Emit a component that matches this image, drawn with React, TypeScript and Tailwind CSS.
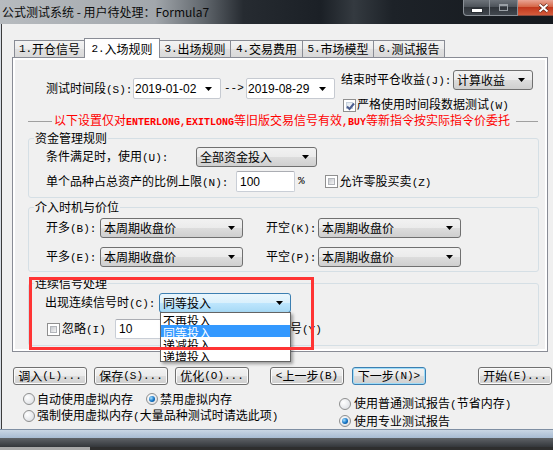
import React from 'react';

const MONO = "font-['Liberation_Mono',monospace]";
const BTN_BG = 'bg-[linear-gradient(#f2f2f2,#ebebeb_50%,#dddddd_50%,#cfcfcf)]';

// SimSun-like: CJK at 12px, half-width Latin in a mono face
function T({ s, mono = 'text-[11px]' }: { s: string; mono?: string }) {
  const parts = s.split(/([\x20-\x7e]+)/);
  return (
    <>
      {parts.map((p, i) =>
        i % 2 === 1 ? (
          <span key={i} className={`${MONO} ${mono}`}>{p}</span>
        ) : (
          <React.Fragment key={i}>{p}</React.Fragment>
        )
      )}
    </>
  );
}

function Arrow() {
  return (
    <svg width="7" height="4" viewBox="0 0 7 4" className="shrink-0">
      <path d="M0 0H7L3.5 4Z" fill="#000" />
    </svg>
  );
}

function Combo({ text, w, focus = false }: { text: string; w: string; focus?: boolean }) {
  return (
    <div
      className={`${w} h-[20px] shrink-0 rounded-[3px] border flex items-center pl-[3px] pr-[7px] ${
        focus
          ? 'border-[#3c7fb1] bg-[linear-gradient(#eaf6fd,#d9f0fc_50%,#bee6fd_50%,#a7d9f5)]'
          : `border-[#707070] ${BTN_BG}`
      }`}
    >
      <span className="flex-1 leading-[14px] whitespace-nowrap">{text}</span>
      <Arrow />
    </div>
  );
}

function DateBox({ v, w }: { v: string; w: string }) {
  return (
    <div className={`${w} h-[21px] shrink-0 bg-white border border-[#c6cad1] rounded-[2px] flex items-center pl-[1px] pr-[8px]`}>
      <span className="flex-1 font-['Liberation_Sans',sans-serif] text-[12px] leading-[14px]">{v}</span>
      <Arrow />
    </div>
  );
}

function Input({ v, w, h = 'h-[21px]' }: { v: string; w: string; h?: string }) {
  return (
    <div className={`${w} ${h} shrink-0 bg-white border border-[#c9ced6] border-t-[#abadb3] rounded-[2px] flex items-center pl-[3px] font-['Liberation_Sans',sans-serif] text-[12px] leading-[14px]`}>
      {v}
    </div>
  );
}

function Check({ on = false }: { on?: boolean }) {
  return (
    <span className="relative block shrink-0 w-[13px] h-[13px] border border-[#8f8f8f] bg-white p-[2px]">
      <span
        className={`block w-full h-full border ${
          on
            ? 'border-[#c5d0dc] bg-[linear-gradient(135deg,#dfe6ee,#fbfcfd)]'
            : 'border-[#b2b5ba] bg-[linear-gradient(135deg,#c6c9ce,#f4f4f4)]'
        }`}
      />
      {on && (
        <svg className="absolute left-[1px] top-[1px]" width="11" height="11" viewBox="0 0 11 11">
          <path d="M2 5.5L4.5 8L9 2.5" fill="none" stroke="#4b5d8f" strokeWidth="2" />
        </svg>
      )}
    </span>
  );
}

function Radio({ on = false }: { on?: boolean }) {
  return (
    <span className="shrink-0 w-[12px] h-[12px] rounded-full border border-[#8e8f8f] bg-[radial-gradient(circle_at_35%_35%,#ffffff,#d6d9de)] flex items-center justify-center">
      {on && (
        <span className="w-[6px] h-[6px] rounded-full bg-[radial-gradient(circle_at_35%_35%,#a6e0ff,#1172c4_55%,#053f78)]" />
      )}
    </span>
  );
}

function Btn({ label, cls = '', focus = false }: { label: string; cls?: string; focus?: boolean }) {
  return (
    <div
      className={`w-[74px] h-[18px] shrink-0 rounded-[3px] border flex items-center justify-center leading-[14px] whitespace-nowrap ${BTN_BG} ${
        focus ? 'border-[#3c7fb1] shadow-[inset_0_0_0_1px_#9fdcf8]' : 'border-[#707070] shadow-[inset_0_0_0_1px_#fbfbfb]'
      } ${cls}`}
    >
      <T s={label} />
    </div>
  );
}

function Group({ title, h, cls, children }: { title: string; h: string; cls: string; children: React.ReactNode }) {
  return (
    <fieldset className={`ml-[13px] w-[511px] ${h} ${cls} border border-[#d5dfe5] rounded-[3px]`}>
      <legend className="ml-[5px] px-[1px] leading-[14px]">{title}</legend>
      {children}
    </fieldset>
  );
}

const tabs = ['1.开仓信号', '2.入场规则', '3.出场规则', '4.交易费用', '5.市场模型', '6.测试报告'];
const tabW = ['w-[71px]', 'w-[76px]', 'w-[72px]', 'w-[73px]', 'w-[72px]', 'w-[72px]'];
const listItems = ['不再投入', '同等投入', '递减投入', '递增投入'];

export default function App() {
  return (
    <div className="relative w-[553px] h-[450px] overflow-hidden bg-[#d7dde5] font-['Noto_Sans_CJK_SC',sans-serif] text-[12px] text-black">
      {/* title bar */}
      <div className="h-[24px] flex justify-between bg-[linear-gradient(90deg,#b7bbbf_0%,#a2a7ac_28%,#60666c_37%,#262b31_44%,#1b2026_58%,#343a40_64%,#1d2228_71%,#15191e_100%)]">
        <div className="pl-[2px] pt-[4px] leading-[16px] text-[#0b0b0b] whitespace-nowrap">公式测试系统 - 用户待处理：Formula7</div>
        <div className="flex items-start">
          <div className="w-[27px] h-[16px] rounded-bl-[4px] border border-t-0 border-[#8a9097] bg-[linear-gradient(#6d737a,#4a5057_50%,#30353b_50%,#42484f)] flex items-center justify-center">
            <span className="w-[10px] h-[3px] mt-[5px] bg-white border border-[#2a2f35] box-content" />
          </div>
          <div className="w-[28px] h-[16px] border border-t-0 border-l-0 border-[#8a9097] bg-[linear-gradient(#6d737a,#4a5057_50%,#30353b_50%,#42484f)] flex items-center justify-center">
            <span className="w-[9px] h-[7px] border border-[#9aa0a6] border-t-2 bg-transparent" />
          </div>
          <div className="w-[35px] h-[16px] border-b border-[#8a4a3e] bg-[linear-gradient(#e9a494,#d3603f_50%,#c2381d_50%,#d45b3c)] flex items-center pl-[20px]">
            <svg width="11" height="10" viewBox="0 0 11 10">
              <path d="M1.5 1.5L9.5 8.5M9.5 1.5L1.5 8.5" stroke="#5a2418" strokeWidth="3.4" />
              <path d="M1.5 1.5L9.5 8.5M9.5 1.5L1.5 8.5" stroke="#ffffff" strokeWidth="2" />
            </svg>
          </div>
        </div>
      </div>

      {/* client area */}
      <div className="ml-px h-[405px] border-l border-[#3c3c3c] bg-[#f0f0f0] overflow-hidden flex flex-col">
        <div className="h-[33px] pt-[14px] pl-[12px] flex items-end">
          {tabs.map((t, i) => (
            <div
              key={t}
              className={`${tabW[i]} ${i ? '-ml-px' : ''} ${
                i === 1
                  ? 'h-[20px] -mb-px relative z-10 bg-white'
                  : 'h-[17px] bg-[linear-gradient(#f3f3f3,#ebebeb_50%,#e1e1e1_50%,#d9d9d9)]'
              } border border-b-0 border-[#898c95] flex items-center justify-center whitespace-nowrap leading-[14px]`}
            >
              <T s={t} />
            </div>
          ))}
        </div>

        <div className="ml-[10px] w-[536px] h-[295px] shrink-0 border border-[#898c95] bg-white p-[2px]">
          <div className="h-full bg-[#f0f0f0]">
            {/* period row */}
            <div className="flex items-start">
              <div className="ml-[31px] mt-[18px] h-[21px] flex items-center">
                <span className="w-[87px] whitespace-nowrap"><T s="测试时间段(S):" /></span>
                <DateBox v="2019-01-02" w="w-[88px]" />
                <span className={`ml-[3px] w-[22px] ${MONO} text-[11px]`}>--&gt;</span>
                <DateBox v="2019-08-29" w="w-[89px]" />
              </div>
              <div className="ml-[6px] mt-[10px] flex flex-col">
                <div className="h-[20px] flex items-center">
                  <span className="w-[112px] whitespace-nowrap"><T s="结束时平仓收益(J):" /></span>
                  <Combo text="计算收益" w="w-[80px]" />
                </div>
                <div className="mt-[8px] h-[14px] flex items-center">
                  <span className="ml-[2px]"><Check on /></span>
                  <span className="ml-[1px] whitespace-nowrap"><T s="严格使用时间段数据测试(W)" /></span>
                </div>
              </div>
            </div>

            {/* red note */}
            <div className="mt-[2px] ml-[13px] h-[14px] flex items-center">
              <span className="shrink-0 w-[24px] h-px bg-[#a0a0a0]" />
              <span className="ml-[2px] shrink-0 text-[#ff0000] whitespace-nowrap leading-[14px]">
                <T s="以下设置仅对ENTERLONG,EXITLONG等旧版交易信号有效,BUY等新指令按实际指令价委托" mono="text-[10px] font-bold" />
              </span>
              <span className="ml-[6px] shrink-0 w-[22px] h-px bg-[#a0a0a0]" />
            </div>

            <Group title="资金管理规则" h="h-[67px]" cls="mt-[3px]">
              <div className="mt-[2px] ml-[17px] h-[20px] flex items-center">
                <span className="w-[150px] whitespace-nowrap"><T s="条件满足时，使用(U):" /></span>
                <Combo text="全部资金投入" w="w-[121px]" />
              </div>
              <div className="mt-[4px] ml-[17px] h-[21px] flex items-center">
                <span className="w-[190px] whitespace-nowrap"><T s="单个品种占总资产的比例上限(N):" /></span>
                <Input v="100" w="w-[59px]" />
                <span className={`ml-[3px] ${MONO} text-[11px]`}>%</span>
                <span className="ml-[20px]"><Check /></span>
                <span className="ml-[2px] whitespace-nowrap"><T s="允许零股买卖(Z)" /></span>
              </div>
            </Group>

            <Group title="介入时机与价位" h="h-[72px]" cls="mt-[2px]">
              <div className="mt-[4px] ml-[17px] h-[20px] flex items-center">
                <span className="w-[54px] whitespace-nowrap"><T s="开多(B):" /></span>
                <Combo text="本周期收盘价" w="w-[143px]" />
                <span className="ml-[23px] w-[52px] whitespace-nowrap"><T s="开空(K):" /></span>
                <Combo text="本周期收盘价" w="w-[143px]" />
              </div>
              <div className="mt-[9px] ml-[17px] h-[20px] flex items-center">
                <span className="w-[54px] whitespace-nowrap"><T s="平多(E):" /></span>
                <Combo text="本周期收盘价" w="w-[143px]" />
                <span className="ml-[23px] w-[52px] whitespace-nowrap"><T s="平空(P):" /></span>
                <Combo text="本周期收盘价" w="w-[143px]" />
              </div>
            </Group>

            <Group title="连续信号处理" h="h-[70px]" cls="mt-[4px]">
              <div className="mt-[3px] ml-[16px] h-[20px] flex items-center">
                <span className="w-[114px] whitespace-nowrap"><T s="出现连续信号时(C):" /></span>
                <Combo text="同等投入" w="w-[132px]" focus />
              </div>
              <div className="mt-[6px] ml-[18px] h-[20px] flex items-center">
                <Check />
                <span className="ml-[2px] w-[53px] whitespace-nowrap"><T s="忽略(I)" /></span>
                <Input v="10" w="w-[110px]" h="h-[20px]" />
                <span className="ml-[5px] whitespace-nowrap"><T s="周期内的信号(Y)" /></span>
              </div>
            </Group>
          </div>
        </div>

        {/* buttons */}
        <div className="mt-[15px] ml-[11px] h-[18px] flex">
          <Btn label="调入(L)..." />
          <Btn label="保存(S)..." cls="ml-[7px]" />
          <Btn label="优化(O)..." cls="ml-[7px]" />
          <Btn label="<上一步(B)" cls="ml-[21px]" />
          <Btn label="下一步(N)>" cls="ml-[8px]" focus />
          <Btn label="开始(E)..." cls="ml-[52px]" />
        </div>

        {/* memory / report options */}
        <div className="mt-[6px] flex items-start">
          <div className="ml-[21px] w-[300px] flex flex-col gap-[1px]">
            <div className="h-[16px] flex items-center whitespace-nowrap">
              <Radio />
              <span className="ml-[2px] w-[96px]">自动使用虚拟内存</span>
              <span className="ml-[13px]"><Radio on /></span>
              <span className="ml-[2px]">禁用虚拟内存</span>
            </div>
            <div className="h-[16px] flex items-center whitespace-nowrap">
              <Radio />
              <span className="ml-[2px]"><T s="强制使用虚拟内存(大量品种测试时请选此项)" /></span>
            </div>
          </div>
          <div className="ml-[16px] mt-[6px] flex flex-col gap-[3px]">
            <div className="h-[14px] flex items-center whitespace-nowrap">
              <Radio />
              <span className="ml-[3px]"><T s="使用普通测试报告(节省内存)" /></span>
            </div>
            <div className="h-[14px] flex items-center whitespace-nowrap">
              <Radio on />
              <span className="ml-[3px]">使用专业测试报告</span>
            </div>
          </div>
        </div>
      </div>

      {/* window frame bottom */}
      <div className="h-[9px] border-t border-[#7f8fa3] bg-[linear-gradient(#c9d6e4,#a7bbd2)]" />
      <div className="h-[9px] bg-[linear-gradient(#5e6267,#34373b)]" />
      <div className="h-[3px] flex">
        <div className="w-[90px] bg-[#a9a9a9]" />
        <div className="flex-1 bg-[#2e2e2e]" />
      </div>

      {/* open dropdown list */}
      <div className="absolute left-[160px] top-[312px] w-[131px] h-[50px] z-20 bg-white border border-[#646464] shadow-[2px_2px_3px_rgba(0,0,0,0.35)]">
        {listItems.map((it, i) => (
          <div
            key={it}
            className={`h-[12px] overflow-hidden pl-[2px] leading-[15px] whitespace-nowrap ${i === 1 ? 'bg-[#3399ff] text-white' : ''}`}
          >
            {it}
          </div>
        ))}
      </div>

      {/* red annotation frame */}
      <div className="absolute left-[29px] top-[277px] w-[285px] h-[73px] z-30 border-[3px] border-[#ff3434]" />
    </div>
  );
}
